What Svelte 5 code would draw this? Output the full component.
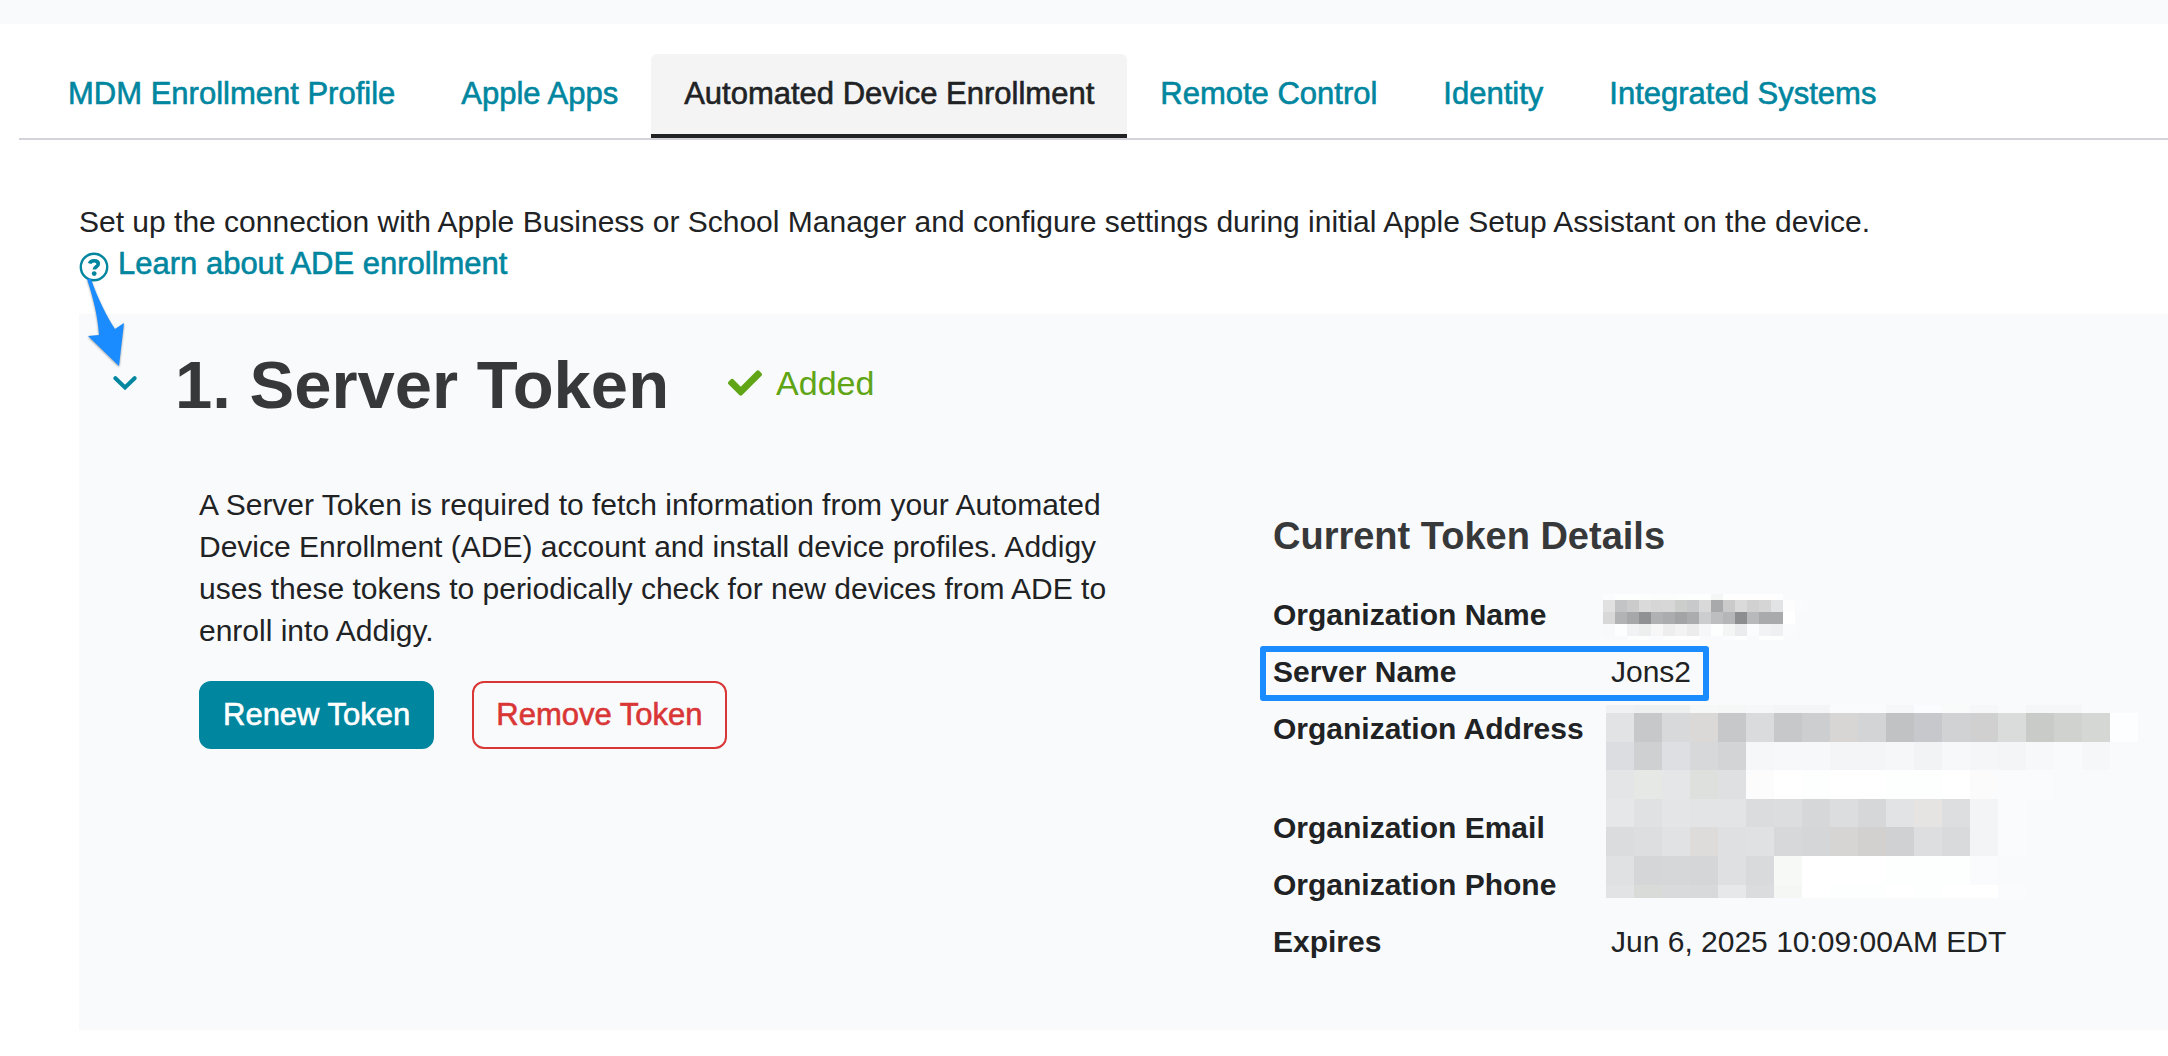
<script>
  const tabs = [
    'MDM Enrollment Profile',
    'Apple Apps',
    'Automated Device Enrollment',
    'Remote Control',
    'Identity',
    'Integrated Systems'
  ];
  let active = $state('Automated Device Enrollment');

  // Redaction mosaics: each row has a height and one colour per cell.
  const nameMosaic = {
    cell: 12,
    rows: [
      [6, '#fbfcfd #fdfefe #fdfefe #fcfdfd #fbfdfd #fbfdfd #fcfdfd #fdfefe #fdfefe #f5f7f7 #fefefe #fefefe #fefefe #fefefe #fefefe'],
      [12, '#e1e1e1 #c3c4c6 #cbcbcb #d9dad9 #d5d6d5 #d6d7d6 #cccecc #c8c9cb #d9d9d9 #a8a9ab #cacaca #dadada #d1d1d1 #d5d5d5 #e2e3e5 #fdfdfd #fafbfc'],
      [12, '#d8d8d8 #b2b3b5 #a6a7a9 #909192 #b0b1b3 #abacae #a3a4a6 #abacae #cccdcf #bdbec0 #b5b6b8 #8d8e90 #b8b9bb #a9aaac #a9aaac #ffffff #f9fafb'],
      [12, '#f7f9fa #fcfeff #f0f2f3 #edefee #f7f7f7 #eeeeee #f4f3f3 #ececec #f6f7f9 #fdfefe #f4f6f5 #ebecee #fbfcfe #f2f3f5 #eff0f2 #fafbfc'],
      [4, '#f9fafc #f9fafc #fcfdfd #fcfdfd #fafbfc #fcfdfd #fefefe #fefefe #f9fafc #f9fafc #fbfcfd #fdfefe #f9fafc #fdfefe #fdfefe']
    ]
  };
  const contactMosaic = {
    cell: 28,
    rows: [
      [8, '#f0f1f2 #eeefef #eef0ef #f6f8f8 #f5f7f7 #f6f7f9 #f4f5f7 #f4f5f7 #fafbfd #fafbfd #f6f7f9 #fbfcff #f9fbfa #f6f7f8 #f9fafc #f5f6f8 #f5f6f8 #f8fafb'],
      [29, '#e2e3e5 #c7c8ca #d8d9db #dad9d8 #c7c8ca #dadbdd #c7c8ca #cdced0 #d7d6d5 #d3d4d6 #c1c2c4 #c7c8cb #d1d2d4 #d1d0d0 #d9dcda #c9cbc9 #d0d2cf #d5d7d5 #fdfeff'],
      [28, '#dcdde0 #cfd0d2 #dedfe2 #d7d8da #d3d4d6 #f6f7f9 #f7f8fa #f7f8fa #f4f5f7 #f4f5f7 #f6f7f9 #f2f3f5 #f7f8fa #f5f6f8 #f4f5f7 #f7f8fa #f9fafb #f6f7f9'],
      [29, '#e4e5e7 #e6e8e6 #e5e6e8 #dee0de #dfe0e2 #fcfcfc #ffffff #fdfffe #ffffff #ffffff #fdfffe #fdfffe #ffffff #fcfbfb #fafbfd #fafbfd'],
      [28, '#e6e7e9 #e0e1e3 #e4e5e7 #e3e4e6 #e3e4e6 #dbdcde #dcdddf #d5d7d8 #dcdddf #d6d7d9 #e2e3e5 #e5e4e3 #dddee0 #f3f4f6 #fafbfd'],
      [29, '#dbdcde #dddee0 #e1e2e4 #dddcdb #dfe0e2 #e0e1e3 #d7d8da #d4d6d7 #d6d5d4 #d2d1d0 #d0d1d3 #dddee0 #d9dadc #f3f4f6 #fafbfd'],
      [29, '#e0e1e3 #d5d6d8 #d6d7d9 #d5d6d8 #dfe0e2 #d9dadc #f7f9f7 #ffffff #ffffff #ffffff #fdfffe #fdfffe #fdfffe #fafbfd'],
      [13, '#e2e3e5 #d9dbd8 #d9dadc #d8d9db #e7e8ea #dbdcde #f5f7f5 #ffffff #fdfffe #fdfffe #ffffff #fdfffe #ffffff #ffffff #fafbfd']
    ]
  };

  function cells({ cell, rows }) {
    const out = [];
    let y = 0;
    for (const [height, colours] of rows) {
      colours.split(' ').forEach((fill, i) => out.push({ x: i * cell, y, w: cell, h: height, fill }));
      y += height;
    }
    return out;
  }
</script>

{#snippet mosaic(data, width, height, cls)}
  <svg class="mosaic {cls}" viewBox="0 0 {width} {height}" shape-rendering="crispEdges" role="img" aria-label="Redacted">
    {#each cells(data) as c}
      <rect x={c.x} y={c.y} width={c.w} height={c.h} fill={c.fill} />
    {/each}
  </svg>
{/snippet}

<div class="strip"></div>

<nav class="tabs" aria-label="Integrations">
  {#each tabs as tab}
    <button class="tab" class:active={tab === active} aria-current={tab === active ? 'page' : undefined} onclick={() => (active = tab)}>{tab}</button>
  {/each}
</nav>

<main>
  <p class="intro">Set up the connection with Apple Business or School Manager and configure settings during initial Apple Setup Assistant on the device.</p>
  <a class="learn" href="#ade">
    <svg class="help" viewBox="0 0 30 30" aria-hidden="true">
      <circle cx="15" cy="15" r="13.2" fill="none" stroke="currentColor" stroke-width="2.4" />
      <path d="M10.6 11.6C11.2 9.6 12.8 8.7 15.1 8.7c2.5 0 4.2 1.3 4.2 3.3 0 2.8-4 2.8-4 5.6" fill="none" stroke="currentColor" stroke-width="3.6" />
      <circle cx="15.2" cy="21.6" r="2.4" fill="currentColor" />
    </svg>
    <span>Learn about ADE enrollment</span>
  </a>

  <section class="panel">
    <header class="head">
      <button class="toggle" aria-label="Collapse section">
        <svg class="chevron" viewBox="0 0 24 16" aria-hidden="true">
          <path d="M2.4 3.2 12 12.4l9.6-9.2" fill="none" stroke="currentColor" stroke-width="4" stroke-linecap="round" />
        </svg>
        <svg class="arrow" viewBox="0 0 44 96" aria-hidden="true">
          <path d="M5 4h4C15 22 25 42 33 54L42 48 37 91 6 61l11-1C16 42 11 22 5 4Z" fill="#1a8cff" />
        </svg>
      </button>
      <h1>1. Server Token</h1>
      <div class="status">
        <svg class="check" viewBox="0 64 512 384" aria-hidden="true">
          <path fill="currentColor" d="M173.898 439.404l-166.4-166.4c-9.997-9.997-9.997-26.206 0-36.204l36.203-36.204c9.997-9.998 26.207-9.998 36.204 0L192 312.69 432.095 72.596c9.997-9.997 26.207-9.997 36.204 0l36.203 36.204c9.997 9.997 9.997 26.206 0 36.204l-294.4 294.401c-9.998 9.997-26.207 9.997-36.204-.001z" />
        </svg>
        <span>Added</span>
      </div>
    </header>

    <div class="columns">
      <div class="about">
        <p>A Server Token is required to fetch information from your Automated Device Enrollment (ADE) account and install device profiles. Addigy uses these tokens to periodically check for new devices from ADE to enroll into Addigy.</p>
        <div class="actions">
          <button class="btn primary">Renew Token</button>
          <button class="btn danger">Remove Token</button>
        </div>
      </div>

      <div class="details">
        <h2>Current Token Details</h2>
        <table>
          <tbody>
            <tr><th scope="row">Organization Name</th><td>{@render mosaic(nameMosaic, 204, 46, 'name')}</td></tr>
            <tr class="marked"><th scope="row">Server Name</th><td>Jons2</td></tr>
            <tr class="tall"><th scope="row">Organization Address</th><td>{@render mosaic(contactMosaic, 532, 193, 'contact')}</td></tr>
            <tr><th scope="row">Organization Email</th><td></td></tr>
            <tr><th scope="row">Organization Phone</th><td></td></tr>
            <tr><th scope="row">Expires</th><td>Jun 6, 2025 10:09:00AM EDT</td></tr>
          </tbody>
        </table>
      </div>
    </div>
  </section>
</main>

<style>
  :global(body) {
    background: #fff;
    color: #202224;
    font: 30px/42px "Liberation Sans", Arial, sans-serif;
    overflow-x: hidden;
  }
  h1, h2, p { margin: 0; }
  button { font: inherit; cursor: pointer; }
  svg { display: block; }

  .strip { height: 24px; background: #f9fafc; }

  .tabs {
    display: flex;
    margin: 30px 0 0 19px;
    padding-left: 16px;
    border-bottom: 2px solid #d3d3d9;
  }
  .tab, .learn, .btn {
    font-size: 31px;
    -webkit-text-stroke: 0.6px currentColor;
  }
  .tab {
    padding: 19px 33px;
    border: 0;
    border-bottom: 4px solid transparent;
    background: none;
    color: #00869f;
    white-space: nowrap;
  }
  .tab.active {
    background: #f4f4f4;
    border-top-left-radius: 6px;
    border-top-right-radius: 6px;
    border-bottom-color: #202224;
    color: #202224;
  }

  main { padding: 61px 0 26px 79px; }
  .learn {
    display: inline-flex;
    align-items: center;
    gap: 9px;
    color: #00869f;
    text-decoration: none;
    vertical-align: top;
  }
  .help { width: 30px; height: 30px; margin-top: 5px; }

  .panel {
    margin-top: 29px;
    padding: 29px 0 59px;
    background: #f9fafc;
  }
  .head { display: flex; align-items: center; }
  .toggle {
    position: relative;
    margin: 0 38px 4px 34px;
    padding: 0;
    border: 0;
    background: none;
    color: #00869f;
  }
  .chevron { width: 24px; height: 16px; }
  .arrow {
    position: absolute;
    left: -31px;
    bottom: 20px;
    width: 44px;
    height: 96px;
    filter: drop-shadow(0 1px 1px rgba(0, 0, 0, 0.4));
  }
  h1 { font-size: 67px; line-height: 84px; color: #37383a; }
  .status {
    display: flex;
    align-items: center;
    gap: 14px;
    margin: 0 0 4px 59px;
    font-size: 34px;
    color: #5fa515;
  }
  .check { width: 34px; height: 26px; }

  .columns {
    display: grid;
    grid-template-columns: 6fr 5fr;
    margin-top: 57px;
    padding-left: 120px;
  }
  .about p { max-width: 940px; }
  .actions { display: flex; gap: 38px; margin-top: 29px; }
  .btn {
    padding: 11px 22px;
    border: 2px solid #00869f;
    border-radius: 12px;
  }
  .primary { background: #00869f; color: #fff; }
  .danger { background: none; border-color: #d93636; color: #d93636; }

  .details { padding-top: 29px; }
  h2 { font-size: 38px; line-height: 46px; color: #37383a; }
  table { margin-top: 28px; border-collapse: collapse; }
  tr { height: 57px; }
  .tall { height: 99px; }
  th, td { padding: 7px 0 8px; vertical-align: top; text-align: left; }
  th { width: 338px; }
  td { position: relative; white-space: nowrap; }
  .marked td::after {
    content: "";
    position: absolute;
    top: 2px;
    left: -351px;
    width: 437px;
    height: 43px;
    border: 6px solid #1a8cff;
    border-radius: 3px;
  }
  .mosaic { position: absolute; }
  .name { top: 7px; left: -8px; width: 204px; height: 46px; }
  .contact { top: 4px; left: -5px; width: 532px; height: 193px; }
</style>
